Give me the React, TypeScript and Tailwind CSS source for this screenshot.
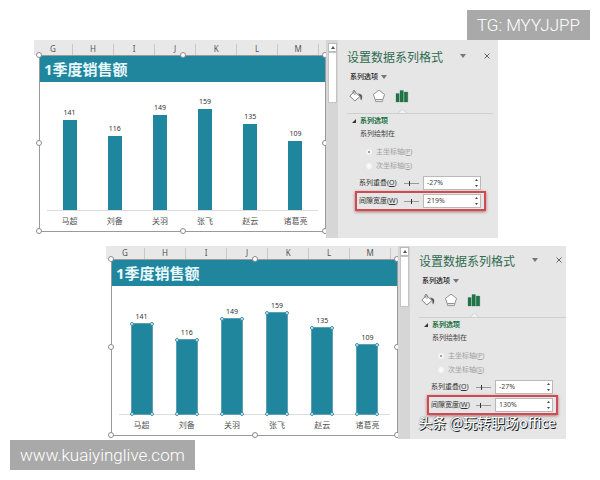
import { useId } from 'react'
import clsx from 'clsx'

type Sale = {
  name: string
  value: number
}

type FigureProps = {
  gapWidth: string
  gapPosition: number
  selected?: boolean
}

const sales: Sale[] = [
  { name: '马超', value: 141 },
  { name: '刘备', value: 116 },
  { name: '关羽', value: 149 },
  { name: '张飞', value: 159 },
  { name: '赵云', value: 135 },
  { name: '诸葛亮', value: 109 },
]

const handles = [
  '-left-1 -top-1',
  'left-1/2 -ml-[3px] -top-1',
  '-right-[3px] -top-1',
  '-left-1 top-1/2 -mt-1',
  '-right-[3px] top-1/2 -mt-1',
  '-left-1 -bottom-[3px]',
  'left-1/2 -ml-[3px] -bottom-[3px]',
  '-right-[3px] -bottom-[3px]',
]

const barHandles = [
  '-left-[2px] -top-[2px]',
  '-right-[2px] -top-[2px]',
  '-left-[2px] -bottom-[2px]',
  '-right-[2px] -bottom-[2px]',
]

function ColumnHeaders({ selected }: { selected?: boolean }) {
  return (
    <div
      className={clsx(
        'flex bg-[#e8e8e8] text-[8px] leading-[10px] text-[#555] items-end',
        selected ? 'h-[13px]' : 'h-[15px]'
      )}
    >
      <div className="flex-[39_1_0] border-r border-[#c8c8c8] text-center pb-px">
        G
      </div>
      {['H', 'I', 'J', 'K', 'L', 'M'].map((letter) => (
        <div
          key={letter}
          className="flex-[41_1_0] border-r border-[#c8c8c8] text-center pb-px"
        >
          {letter}
        </div>
      ))}
      <div className="flex-[7_1_0]" />
    </div>
  )
}

function Chart({ selected }: { selected?: boolean }) {
  return (
    <div className="relative ml-[5px] h-[177px] flex flex-col border border-[#9a9a9a] bg-white">
      <h2 className="h-[26px] pl-1 bg-[#1f869e] text-[15px] leading-[26px] font-bold text-[#e9f8fb] whitespace-nowrap">
        1季度销售额
      </h2>
      <div className="flex-1 mx-[7px] flex items-end border-b border-[#dcdcdc]">
        {sales.map((sale) => (
          <div key={sale.name} className="flex-1 flex flex-col items-center">
            <span className="text-[7px] leading-[10px] mb-[2px] text-[#333]">
              {sale.value}
            </span>
            <div
              className={clsx(
                'relative bg-[#1f869e]',
                selected ? 'w-5 outline outline-[#5f9fb4]' : 'w-[14px]'
              )}
              style={{ height: Math.round(sale.value * 0.635) }}
            >
              {selected &&
                barHandles.map((place) => (
                  <span
                    key={place}
                    className={clsx(
                      'absolute size-1 rounded-full border border-[#3c8fab] bg-[#e6f3f8]',
                      place
                    )}
                  />
                ))}
            </div>
          </div>
        ))}
      </div>
      <div className="h-5 mx-[7px] flex items-center text-[8px] leading-[10px] text-[#555]">
        {sales.map((sale) => (
          <span
            key={sale.name}
            className="flex-1 text-center whitespace-nowrap"
          >
            {sale.name}
          </span>
        ))}
      </div>
      {handles.map((place) => (
        <span
          key={place}
          className={clsx(
            'absolute size-[6px] rounded-full border border-[#8c8c8c] bg-white',
            place
          )}
        />
      ))}
    </div>
  )
}

function ScrollBar({ selected }: { selected?: boolean }) {
  return (
    <div
      className={clsx(
        'w-[14px] shrink-0 flex flex-col bg-[#d6d6d6] border-r-2 border-[#e6e6e6] pl-[2px]',
        selected ? 'pt-px' : 'pt-[3px]'
      )}
    >
      <button
        aria-label="向上滚动"
        className="size-[9px] flex items-center justify-center border border-[#bbb] bg-white"
      >
        <svg viewBox="0 0 4 3" className="w-1 h-[3px]">
          <path d="M0 3 2 0 4 3Z" fill="#555" />
        </svg>
      </button>
      <div className="h-[51px] w-[9px] border border-[#c4c4c4] bg-white" />
    </div>
  )
}

function DownArrow() {
  return (
    <svg viewBox="0 0 6 4" className="w-[6px] h-1">
      <path d="M0 0H6L3 4Z" fill="#777" />
    </svg>
  )
}

function BucketIcon() {
  return (
    <svg viewBox="0 0 14 14" className="size-[14px]" fill="none">
      <path
        d="M5.5 2.5 11 7.5 5.8 12 .8 7Z"
        fill="#fff"
        stroke="#777"
        strokeWidth="0.9"
      />
      <path d="M4 5V2Q5 0 6 2V6" stroke="#777" strokeWidth="0.8" />
      <path
        d="M9 4.5Q13.8 5 13.2 8.5L12.3 11.5Q11 10 11.4 7.8Z"
        fill="#555"
      />
    </svg>
  )
}

function PentagonIcon() {
  return (
    <svg viewBox="0 0 14 14" className="size-[14px]" fill="none">
      <path
        d="M7 1.2 12.6 5.4 10.8 10.5H3.2L1.4 5.4Z"
        fill="#fff"
        stroke="#888"
        strokeWidth="0.9"
      />
      <path d="M3.2 10.5 3.6 12.6H10.4L10.8 10.5" stroke="#999" />
    </svg>
  )
}

function BarsIcon() {
  return (
    <svg viewBox="0 0 14 14" className="size-[14px]">
      <path
        d="M1 4.5H4.2V13H1ZM5 1.5H8.4V13H5ZM9.2 3H12.8V13H9.2Z"
        fill="#217346"
        stroke="#217346"
        strokeWidth="0.3"
      />
    </svg>
  )
}

type FieldProps = {
  label: string
  hotkey: string
  value: string
  position: number
}

function Field({ label, hotkey, value, position }: FieldProps) {
  const id = useId()

  return (
    <div className="flex items-center h-[14px]">
      <label
        htmlFor={id}
        className="w-[45px] text-[7px] leading-[10px] whitespace-nowrap text-[#333]"
      >
        {label}(<u>{hotkey}</u>)
      </label>
      <input
        type="range"
        aria-label={label}
        defaultValue={position}
        className="appearance-none w-[15px] h-[5px] mr-1 bg-[linear-gradient(#999,#999)] bg-[length:100%_1px] bg-center bg-no-repeat [&::-webkit-slider-thumb]:appearance-none [&::-webkit-slider-thumb]:w-px [&::-webkit-slider-thumb]:h-[5px] [&::-webkit-slider-thumb]:bg-[#333]"
      />
      <div className="w-[58px] h-[14px] flex border border-[#b9b9b9] bg-white">
        <input
          id={id}
          type="text"
          defaultValue={value}
          className="min-w-0 flex-1 pl-[3px] text-[7px] leading-[12px] text-[#444]"
        />
        <div className="w-2 flex flex-col justify-around items-center">
          <button aria-label="增加">
            <svg viewBox="0 0 3 2" className="block w-[3px] h-[2px]">
              <path d="M0 2 1.5 0 3 2Z" fill="#444" />
            </svg>
          </button>
          <button aria-label="减少">
            <svg viewBox="0 0 3 2" className="block w-[3px] h-[2px]">
              <path d="M0 0H3L1.5 2Z" fill="#444" />
            </svg>
          </button>
        </div>
      </div>
    </div>
  )
}

function FormatPanel({ gapWidth, gapPosition, selected }: FigureProps) {
  const group = useId()

  return (
    <aside
      className={clsx(
        'shrink-0 bg-[#e6e6e6] text-[7px] leading-[10px] text-[#444]',
        selected ? 'w-[154px] pt-2 pb-6' : 'w-[158px] pt-[10px] pb-[27px]'
      )}
    >
      <div className="flex items-center pl-[7px] h-4">
        <h3 className="w-[113px] text-[12px] leading-4 text-[#2f6b4f] whitespace-nowrap">
          设置数据系列格式
        </h3>
        <button aria-label="任务窗格选项" className="mb-1">
          <DownArrow />
        </button>
        <button aria-label="关闭" className="ml-[18px] mb-1">
          <svg viewBox="0 0 6 6" className="size-[6px]">
            <path d="M.5.5 5.5 5.5M5.5.5.5 5.5" stroke="#666" />
          </svg>
        </button>
      </div>
      <button className="mt-[6px] ml-[10px] h-[10px] flex items-center gap-[3px] font-medium text-[#222]">
        系列选项
        <DownArrow />
      </button>
      <div className="mt-[7px] ml-[9px] flex gap-[9px]">
        <button aria-label="填充与线条">
          <BucketIcon />
        </button>
        <button aria-label="效果">
          <PentagonIcon />
        </button>
        <button aria-label="系列选项">
          <BarsIcon />
        </button>
      </div>
      <svg
        viewBox="0 0 9 4"
        className="block mt-[6px] ml-[58px] w-[9px] h-1"
        fill="none"
      >
        <path d="M0 4 4.5 0 9 4" stroke="#d0d0d0" fill="#f2f2f2" />
      </svg>
      <hr
        className={clsx('ml-[7px] border-[#cfcfcf]', !selected && 'mr-[5px]')}
      />
      <button className="mt-[2px] ml-[12px] h-[10px] flex items-center gap-1 font-bold text-[#217346]">
        <svg viewBox="0 0 4 4" className="size-1">
          <path d="M4 0V4H0Z" fill="#333" />
        </svg>
        系列选项
      </button>
      <fieldset disabled className="mt-[3px]">
        <legend className="ml-5 h-[10px]">系列绘制在</legend>
        <div className="mt-2 ml-[26px] flex flex-col gap-1 text-[#a0a0a0]">
          <label className="flex items-center gap-1 h-[10px]">
            <input
              type="radio"
              name={group}
              defaultChecked
              className="appearance-none size-[6px] rounded-full bg-white border-2 border-[#f4f4f4] checked:bg-[#888]"
            />
            <span>
              主坐标轴(<u>P</u>)
            </span>
          </label>
          <label className="flex items-center gap-1 h-[10px]">
            <input
              type="radio"
              name={group}
              className="appearance-none size-[6px] rounded-full bg-white border-2 border-[#f4f4f4] checked:bg-[#888]"
            />
            <span>
              次坐标轴(<u>S</u>)
            </span>
          </label>
        </div>
      </fieldset>
      <div className="mt-[5px] ml-[19px]">
        <Field label="系列重叠" hotkey="O" value="-27%" position={35} />
      </div>
      <div className="mt-px ml-[15px] w-[131px] border-2 border-[#cf4a52] py-px pl-[2px] shadow-[0_1px_3px_rgba(120,0,0,0.5)]">
        <Field
          label="间隙宽度"
          hotkey="W"
          value={gapWidth}
          position={gapPosition}
        />
      </div>
    </aside>
  )
}

function Figure(props: FigureProps) {
  return (
    <section className="flex">
      <div className="flex-1 min-w-0 overflow-hidden">
        <ColumnHeaders selected={props.selected} />
        <Chart selected={props.selected} />
      </div>
      <ScrollBar selected={props.selected} />
      <FormatPanel {...props} />
    </section>
  )
}

export default function App() {
  return (
    <main className="relative min-h-screen bg-white pt-10 font-['Noto_Sans','Noto_Sans_CJK_SC',sans-serif]">
      <div className="ml-[34px] mr-[102px]">
        <Figure gapWidth="219%" gapPosition={50} />
      </div>
      <div className="relative mt-2 ml-[106px] mr-[34px]">
        <Figure gapWidth="130%" gapPosition={30} selected />
        <p className="absolute right-[10px] bottom-2 font-['Noto_Sans_CJK_SC',sans-serif] text-[14px] leading-[18px] font-medium text-white whitespace-nowrap [text-shadow:1px_1px_0_#222,0_0_1px_#222]">
          头条 @玩转职场office
        </p>
      </div>
      <p className="absolute right-[10px] top-[10px] h-[30px] px-[10px] bg-[#a9a9a9] font-[Roboto,sans-serif] font-light text-[17px] leading-[30px] text-white">
        TG: MYYJJPP
      </p>
      <a
        href="#"
        className="absolute left-[10px] top-[440px] h-[30px] px-[10px] bg-[#a9a9a9] font-[Roboto,sans-serif] font-light text-[17px] leading-[30px] text-white"
      >
        www.kuaiyinglive.com
      </a>
    </main>
  )
}
